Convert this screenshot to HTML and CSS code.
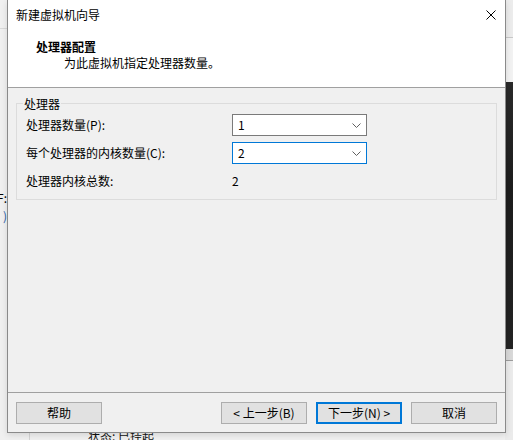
FILE: index.html
```html
<!DOCTYPE html>
<html lang="zh-CN">
<head>
<meta charset="utf-8">
<title>新建虚拟机向导</title>
<link rel="stylesheet" href="styles.css">
</head>
<body>
<div class="desktop">
  <div class="app-left">
    <div class="frag frag-f">F:</div>
    <div class="frag frag-paren">)</div>
  </div>
  <div class="app-center">
    <div class="status-bar">
      <div class="status-gutter"></div>
      <span class="status-text">状态: 已挂起</span>
    </div>
  </div>
  <div class="app-right">
    <div class="band band-top"></div>
    <div class="band band-dark"></div>
    <div class="band band-mid"></div>
    <div class="band band-light"></div>
  </div>

  <div class="dialog">
    <div class="header">
      <div class="titlebar">
        <span class="title">新建虚拟机向导</span>
        <span class="close">
          <svg width="10" height="10" viewBox="0 0 10 10"><path d="M0.5 0.5 L9.5 9.5 M9.5 0.5 L0.5 9.5" stroke="#000" stroke-width="1" fill="none"/></svg>
        </span>
      </div>
      <div class="heading">处理器配置</div>
      <div class="subtitle">为此虚拟机指定处理器数量。</div>
    </div>
    <div class="body">
      <div class="group">
        <div class="legend">处理器</div>
        <div class="rows">
          <div class="label">处理器数量(P):</div>
          <div class="select">
            <span class="value">1</span>
            <svg class="chev" width="9" height="5" viewBox="0 0 9 5"><path d="M0.5 0.5 L4.5 4.5 L8.5 0.5" stroke="#606060" stroke-width="1" fill="none"/></svg>
          </div>
          <div class="label">每个处理器的内核数量(C):</div>
          <div class="select select-focus">
            <span class="value">2</span>
            <svg class="chev" width="9" height="5" viewBox="0 0 9 5"><path d="M0.5 0.5 L4.5 4.5 L8.5 0.5" stroke="#606060" stroke-width="1" fill="none"/></svg>
          </div>
          <div class="label">处理器内核总数:</div>
          <div class="static-value">2</div>
        </div>
      </div>
    </div>
    <div class="footer">
      <button class="btn">帮助</button>
      <div class="spacer"></div>
      <button class="btn">&lt; 上一步(B)</button>
      <button class="btn btn-default">下一步(N) &gt;</button>
      <button class="btn">取消</button>
    </div>
  </div>
</div>
</body>
</html>
```

FILE: styles.css
```css
* { box-sizing: border-box; }

html, body {
  margin: 0;
  padding: 0;
  background: #f0f0f0;
}

body {
  font-family: "Noto Sans CJK SC", "Noto Sans", sans-serif;
  font-size: 12px;
  color: #000;
}

.desktop {
  position: relative;
  width: 513px;
  height: 440px;
  overflow: hidden;
  display: flex;
  background: #f0f0f0;
}

/* background application fragments */
.app-left {
  width: 7px;
  flex: none;
  border-top: 1px solid #d9d9d9;
  margin-top: 28px;
  overflow: hidden;
  display: flex;
  flex-direction: column;
  align-items: flex-end;
}

.frag {
  line-height: 16px;
  white-space: nowrap;
}

.frag-f { margin-top: 161px; }
.frag-paren { margin-top: 2px; color: #1f5fa8; }

.app-center {
  flex: 1;
  display: flex;
  flex-direction: column;
  justify-content: flex-end;
}

.status-bar {
  height: 9px;
  display: flex;
  overflow: visible;
}

.status-gutter {
  width: 23px;
  flex: none;
  border-right: 1px solid #d4d4d4;
}

.status-text {
  margin-left: 58px;
  margin-top: -3px;
  line-height: 16px;
  color: #111;
  white-space: nowrap;
}

.app-right {
  width: 8px;
  flex: none;
  display: flex;
  flex-direction: column;
}

.band-top {
  height: 82px;
  background-image: linear-gradient(#ececec 37px, #c8c8c8 37px, #c8c8c8 38px, #f2f2f2 38px);
}

.band-dark {
  height: 267px;
  background: linear-gradient(#2a2a2a, #1d1d1d 40%, #232323);
}

.band-mid {
  height: 12px;
  background: #d8d8d8;
  border-bottom: 1px solid #9c9c9c;
}

.band-light {
  flex: 1;
  background: #ebebeb;
}

/* dialog window */
.dialog {
  position: absolute;
  left: 7px;
  top: 0;
  width: 499px;
  height: 433px;
  border: 1px solid #8a8a8a;
  border-top: 0;
  background: #f0f0f0;
  display: flex;
  flex-direction: column;
  box-shadow: 0 2px 6px rgba(0, 0, 0, 0.12);
}

.header {
  height: 88px;
  background: #fff;
  border-bottom: 1px solid #a0a0a0;
  flex: none;
}

.titlebar {
  height: 30px;
  display: flex;
  align-items: center;
  justify-content: space-between;
  padding: 0 9px 0 8px;
}

.title {
  line-height: 16px;
}

.close {
  width: 10px;
  height: 10px;
  display: block;
}

.close svg { display: block; }

.heading {
  margin-top: 9px;
  padding-left: 28px;
  line-height: 16px;
  font-weight: bold;
}

.subtitle {
  padding-left: 56px;
  line-height: 16px;
}

.body {
  flex: 1;
  padding: 15px 8px 0 8px;
  border-bottom: 1px solid #a0a0a0;
}

.group {
  height: 97px;
  border: 1px solid #dcdcdc;
  padding: 0 0 0 9px;
}

.legend {
  display: block;
  width: fit-content;
  height: 16px;
  margin-top: -8px;
  margin-left: -3px;
  padding: 0 1px;
  line-height: 16px;
  background: #f0f0f0;
}

.rows {
  margin-top: 2px;
  display: grid;
  grid-template-columns: 206px 135px;
  grid-auto-rows: 22px;
  row-gap: 6px;
  align-items: center;
}

.label {
  line-height: 16px;
  white-space: nowrap;
}

.select {
  height: 22px;
  border: 1px solid #7a7a7a;
  background: #fff;
  display: flex;
  align-items: center;
  justify-content: space-between;
  padding: 0 5px 0 5px;
}

.select-focus {
  border-color: #0078d7;
}

.value {
  line-height: 16px;
}

.chev { display: block; }

.static-value {
  line-height: 16px;
}

.footer {
  height: 39px;
  flex: none;
  display: flex;
  align-items: flex-start;
  gap: 9px;
  padding: 9px 8px 0 8px;
}

.spacer { flex: 1; }

.btn {
  width: 86px;
  height: 22px;
  padding: 0;
  margin: 0;
  border: 1px solid #adadad;
  background: #e1e1e1;
  font-family: "Noto Sans CJK SC", "Noto Sans", sans-serif;
  font-size: 12px;
  line-height: 16px;
  color: #000;
  flex: none;
}

.btn-default {
  border: 2px solid #0078d7;
}
```
